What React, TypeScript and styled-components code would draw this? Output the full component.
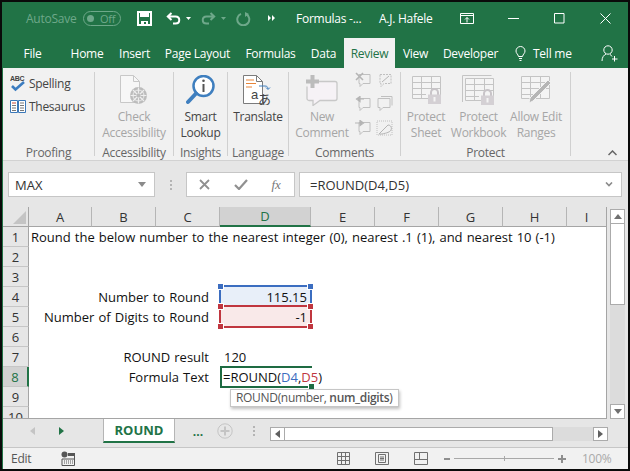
import React from 'react'
import styled, { createGlobalStyle } from 'styled-components'

const GREEN = '#217346'
const UI_FONT = "'Open Sans', 'Noto Sans', sans-serif"

const GlobalStyle = createGlobalStyle`
  html, body { margin: 0; padding: 0; background: #000; }
  body { font-family: ${UI_FONT}; font-size: 12px; }
`

const Frame = styled.div`
  width: 630px;
  height: 471px;
  box-sizing: border-box;
  padding: 2px;
  background: #0a0a0a;
  overflow: hidden;
`

const Window = styled.div`
  height: 467px;
  display: flex;
  flex-direction: column;
  box-sizing: border-box;
  border-left: 1px solid ${GREEN};
  border-bottom: 1px solid ${GREEN};
  background: #e6e6e6;
`

const TitleBar = styled.div`
  height: 32px;
  flex: none;
  display: flex;
  align-items: center;
  background: ${GREEN};
  color: #fff;
  letter-spacing: -0.25px;
`

const TitleSlot = styled.div<{ $w: number; $faded?: boolean }>`
  width: ${p => p.$w}px;
  flex: none;
  display: flex;
  align-items: center;
  white-space: nowrap;
  color: ${p => (p.$faded ? '#6ea88a' : '#fff')};
`

const Toggle = styled.div`
  width: 38px;
  height: 15px;
  box-sizing: border-box;
  border: 1px solid #6ea88a;
  border-radius: 8px;
  display: flex;
  align-items: center;
  padding-left: 3px;
  gap: 6px;
  color: #6ea88a;
  font-size: 11px;
  &::before {
    content: '';
    width: 7px;
    height: 7px;
    border-radius: 50%;
    background: #6ea88a;
  }
`

const TabBar = styled.div`
  height: 34px;
  flex: none;
  display: flex;
  background: ${GREEN};
  letter-spacing: -0.25px;
`

const Tab = styled.div<{ $w: number; $active?: boolean }>`
  width: ${p => p.$w}px;
  flex: none;
  margin-top: 4px;
  box-sizing: border-box;
  display: flex;
  align-items: center;
  justify-content: center;
  color: ${p => (p.$active ? GREEN : '#fff')};
  background: ${p => (p.$active ? '#f1f1f1' : 'transparent')};
`

const TellMe = styled.div`
  width: 96px;
  flex: none;
  margin-top: 4px;
  padding-left: 10px;
  box-sizing: border-box;
  display: flex;
  align-items: center;
  gap: 7px;
  color: #fff;
`

const AccountSlot = styled.div`
  margin-top: 4px;
  display: flex;
  align-items: center;
`

const Ribbon = styled.div`
  height: 93px;
  flex: none;
  box-sizing: border-box;
  padding-top: 4px;
  display: flex;
  position: relative;
  background: #f1f1f1;
  border-bottom: 1px solid #d2d2d2;
  letter-spacing: -0.28px;
`

const Group = styled.div<{ $w: number }>`
  width: ${p => p.$w}px;
  height: 84px;
  flex: none;
  box-sizing: border-box;
  border-right: 1px solid #d0d0d0;
  display: flex;
  flex-direction: column;
`

const GroupBody = styled.div<{ $start?: boolean }>`
  height: 72px;
  display: flex;
  justify-content: ${p => (p.$start ? 'flex-start' : 'center')};
`

const GroupLabel = styled.div`
  height: 12px;
  line-height: 18px;
  text-align: center;
  color: #666;
  white-space: nowrap;
`

const SmallColumn = styled.div`
  width: 100%;
  padding-left: 7px;
  box-sizing: border-box;
  display: flex;
  flex-direction: column;
`

const SmallButton = styled.div`
  height: 23px;
  display: flex;
  align-items: center;
  gap: 3px;
  color: #444;
`

const BigButton = styled.div<{ $w?: number; $disabled?: boolean }>`
  width: ${p => (p.$w ? `${p.$w}px` : 'auto')};
  flex: none;
  display: flex;
  flex-direction: column;
  align-items: center;
  color: ${p => (p.$disabled ? '#a6a6a6' : '#444')};
`

const BigIcon = styled.div`
  height: 37px;
  box-sizing: border-box;
  padding-top: 3px;
  display: flex;
  align-items: flex-start;
  justify-content: center;
`

const Label = styled.div`
  height: 16px;
  line-height: 16px;
  white-space: nowrap;
  text-align: center;
`

const MiniIcons = styled.div`
  display: grid;
  grid-template-columns: 21px 21px;
  grid-auto-rows: 24px;
  margin: -4px 0 0 -2px;
  align-self: flex-start;
  align-items: center;
  justify-items: center;
`

const Collapse = styled.svg`
  position: absolute;
  right: 11px;
  bottom: 4px;
`

const FormulaArea = styled.div`
  height: 46px;
  flex: none;
  box-sizing: border-box;
  padding: 11px 5px 0 5px;
  display: flex;
  align-items: flex-start;
`

const FieldBox = styled.div<{ $w: number; $gap?: number }>`
  width: ${p => p.$w}px;
  height: 25px;
  margin-left: ${p => p.$gap ?? 0}px;
  flex: none;
  box-sizing: border-box;
  background: #fff;
  border: 1px solid #c6c6c6;
  display: flex;
  align-items: center;
  font-size: 13px;
  color: #333;
`

const NameText = styled.span`
  flex: 1;
  padding-left: 6px;
`

const Grip = styled.div`
  width: 31px;
  flex: none;
  height: 25px;
  display: flex;
  flex-direction: column;
  justify-content: center;
  align-items: center;
  gap: 2px;
  i {
    width: 2px;
    height: 2px;
    background: #b4b4b4;
  }
`

const TabGrip = styled(Grip)`
  width: 37px;
  box-sizing: border-box;
  padding-left: 5px;
`

const FxSlot = styled.div`
  flex: 1;
  display: flex;
  justify-content: center;
  align-items: center;
`

const DropSlot = styled(FxSlot)`
  flex: none;
  width: 24px;
`

const FormulaText = styled.span`
  flex: 1;
  padding-left: 10px;
`

const SheetArea = styled.div`
  height: 212px;
  flex: none;
  display: flex;
`

const SheetGrid = styled.div`
  width: 604px;
  height: 212px;
  flex: none;
  overflow: hidden;
  position: relative;
  display: grid;
  grid-template-columns: 26px 63px 64px 64px 91px 64px 64px 64px 64px 40px;
  grid-auto-rows: 20px;
  box-sizing: border-box;
  border-right: 1px solid #a5a5a5;
  border-bottom: 1px solid #a5a5a5;
  background: #fff;
  font-family: ${UI_FONT};
  font-size: 13px;
  word-spacing: 0.7px;
  color: #111;
`

const Corner = styled.div`
  background: #e6e6e6;
  border-bottom: 1px solid #a5a5a5;
  border-right: 1px solid #a5a5a5;
  display: flex;
  align-items: flex-end;
  justify-content: flex-end;
  padding: 0 2px 2px 0;
  &::after {
    content: '';
    border-style: solid;
    border-width: 0 0 13px 13px;
    border-color: transparent transparent #c4c4c4 transparent;
  }
`

const ColHead = styled.div<{ $active?: boolean }>`
  display: flex;
  align-items: center;
  justify-content: center;
  box-sizing: border-box;
  border-right: 1px solid #b5b5b5;
  border-bottom: ${p => (p.$active ? `2px solid ${GREEN}` : '1px solid #a5a5a5')};
  color: ${p => (p.$active ? GREEN : '#333')};
  background: ${p => (p.$active ? '#d2d2d2' : '#e6e6e6')};
`

const RowHead = styled.div<{ $active?: boolean }>`
  display: flex;
  align-items: center;
  justify-content: center;
  box-sizing: border-box;
  border-bottom: 1px solid #c6c6c6;
  border-right: ${p => (p.$active ? `2px solid ${GREEN}` : '1px solid #a5a5a5')};
  color: ${p => (p.$active ? GREEN : '#333')};
  background: ${p => (p.$active ? '#d2d2d2' : '#e6e6e6')};
`

const Cell = styled.div<{ $align?: 'left' | 'right'; $indent?: number; $fill?: string }>`
  position: relative;
  display: flex;
  align-items: center;
  white-space: nowrap;
  background: ${p => p.$fill || 'transparent'};
  justify-content: ${p => (p.$align === 'right' ? 'flex-end' : 'flex-start')};
  padding-left: ${p => (p.$align === 'right' ? 0 : p.$indent ?? 2)}px;
  padding-right: ${p => (p.$align === 'right' ? p.$indent ?? 4 : 0)}px;
  box-sizing: border-box;
`

const RangeBox = styled.div<{ $color: string; $h: number }>`
  position: absolute;
  left: -1px;
  top: -2px;
  width: 93px;
  height: ${p => p.$h}px;
  box-sizing: border-box;
  border: 2px solid ${p => p.$color};
`

const RangeHandle = styled.i<{ $color: string; $x: 'left' | 'right'; $y: 'top' | 'bottom' }>`
  position: absolute;
  width: 5px;
  height: 5px;
  ${p => p.$x}: -3px;
  ${p => p.$y}: -3px;
  background: ${p => p.$color};
  box-shadow: 0 0 0 1px #fff;
`

const EditBox = styled.div`
  position: absolute;
  left: 0;
  top: -1px;
  width: 92px;
  height: 22px;
  box-sizing: border-box;
  border: 2px solid #1e6b42;
  border-right: 0;
`

const EditHandle = styled.i`
  position: absolute;
  right: -2px;
  bottom: -3px;
  width: 5px;
  height: 5px;
  background: #1e6b42;
  box-shadow: 0 0 0 1px #fff;
`

const FormulaEcho = styled.span`
  position: relative;
  margin-left: 1px;
`

const RefText = styled.span<{ $color: string }>`
  color: ${p => p.$color};
`

const Tooltip = styled.div`
  position: absolute;
  left: 10px;
  top: 22px;
  width: 169px;
  height: 18px;
  box-sizing: border-box;
  background: #fff;
  border: 1px solid #c6c6c6;
  box-shadow: 1px 2px 3px rgba(0, 0, 0, 0.25);
  color: #555;
  font-size: 12px;
  padding-left: 5px;
  line-height: 15px;
  letter-spacing: -0.32px;
  word-spacing: 0;
  b { font-weight: 600; }
`

const VScroll = styled.div`
  width: 15px;
  height: 212px;
  margin-left: 3px;
  padding-top: 2px;
  box-sizing: border-box;
  flex: none;
  display: flex;
  flex-direction: column;
`

const ScrollBtn = styled.div<{ $w?: number; $h?: number }>`
  width: ${p => p.$w ?? 15}px;
  height: ${p => p.$h ?? 15}px;
  flex: none;
  box-sizing: border-box;
  background: #fff;
  border: 1px solid #ababab;
  display: flex;
  align-items: center;
  justify-content: center;
`

const VThumb = styled.div`
  height: 81px;
  flex: none;
  box-sizing: border-box;
  background: #fff;
  border: 1px solid #ababab;
  border-top: 0;
`

const VTrack = styled.div`
  flex: 1;
  background: #dcdcdc;
`

const SheetTabs = styled.div`
  height: 24px;
  flex: none;
  display: flex;
  align-items: stretch;
`

const NavSlot = styled.div`
  width: 100px;
  flex: none;
  padding-left: 27px;
  gap: 24px;
  box-sizing: border-box;
  display: flex;
  align-items: center;
`

const SheetTab = styled.div`
  width: 72px;
  flex: none;
  box-sizing: border-box;
  background: #fff;
  border-left: 1px solid #b5b5b5;
  border-right: 1px solid #b5b5b5;
  border-bottom: 2px solid ${GREEN};
  display: flex;
  align-items: center;
  justify-content: center;
  color: ${GREEN};
  font-weight: 700;
  font-size: 13px;
`

const More = styled.div`
  width: 42px;
  flex: none;
  box-sizing: border-box;
  padding-left: 4px;
  display: flex;
  align-items: center;
  justify-content: center;
  color: ${GREEN};
  font-weight: 700;
`

const TabTools = styled.div`
  width: 53px;
  flex: none;
  display: flex;
  align-items: center;
  svg { flex: none; }
`

const HScroll = styled.div`
  flex: none;
  width: 338px;
  margin-top: 8px;
  height: 14px;
  display: flex;
`

const HThumb = styled.div`
  width: 268px;
  flex: none;
  box-sizing: border-box;
  background: #fff;
  border: 1px solid #ababab;
  border-left: 0;
`

const HTrack = styled.div`
  flex: 1;
  background: #dcdcdc;
`

const StatusBar = styled.div`
  height: 22px;
  margin-top: 4px;
  flex: none;
  box-sizing: border-box;
  border-top: 1px solid #c6c6c6;
  background: #f1f1f1;
  display: flex;
  align-items: center;
  color: #555;
  letter-spacing: -0.25px;
`

const StatusText = styled.span<{ $w: number; $pad?: number; $muted?: boolean }>`
  width: ${p => p.$w}px;
  padding-left: ${p => p.$pad ?? 0}px;
  box-sizing: border-box;
  flex: none;
  color: ${p => (p.$muted ? '#a9a9a9' : '#555')};
`

const StatusIcons = styled.div`
  display: flex;
  width: 103px;
  gap: 25px;
  margin-left: 262px;
  flex: none;
  align-items: center;
`

const Zoom = styled.div`
  display: flex;
  align-items: center;
  width: 138px;
  margin-left: 4px;
  flex: none;
`

const ZoomMark = styled.span<{ $plus?: boolean }>`
  position: relative;
  width: ${p => (p.$plus ? 8 : 6)}px;
  height: 2px;
  background: #8e8e8e;
  flex: none;
  &::after {
    content: '';
    display: ${p => (p.$plus ? 'block' : 'none')};
    position: absolute;
    left: 3px;
    top: -3px;
    width: 2px;
    height: 8px;
    background: #8e8e8e;
  }
`

const ZoomTrack = styled.div`
  position: relative;
  width: 100px;
  height: 1px;
  margin: 0 4px;
  flex: none;
  background: #a8a8a8;
  &::after {
    content: '';
    position: absolute;
    left: 50px;
    top: -2px;
    width: 1px;
    height: 5px;
    background: #a8a8a8;
  }
`

/* ---------- drawn icons ---------- */

const SaveIcon = () => (
  <svg width="15" height="15" viewBox="0 0 15 15">
    <path d="M1 1h13v13H1z" fill="none" stroke="#fff" strokeWidth="2" />
    <path d="M3 1h9v5H3zM4 10h7v4H4z" fill="#fff" />
    <path d="M7 11h2v2H7z" fill={GREEN} />
  </svg>
)

const UndoIcon = ({ color }: { color: string }) => (
  <svg width="15" height="13" viewBox="0 0 15 13">
    <path d="M5.5 1 1.8 4.5l3.7 3.5M2 4.5h7.5c5 0 5 7 0 7H7" fill="none" stroke={color} strokeWidth="2" />
  </svg>
)

const RedoIcon = ({ color }: { color: string }) => (
  <svg width="15" height="13" viewBox="0 0 15 13">
    <path d="M9.5 1l3.7 3.5L9.5 8M13 4.5H5.5c-5 0-5 7 0 7H8" fill="none" stroke={color} strokeWidth="2" />
  </svg>
)

const RepeatIcon = () => (
  <svg width="15" height="15" viewBox="0 0 15 15">
    <path d="M5 2.800a6 6 0 1 0 5 .2" fill="none" stroke="#6ea88a" strokeWidth="2" />
    <path d="M9 1v5l4-3z" fill="#6ea88a" />
  </svg>
)

const Caret = ({ color }: { color: string }) => (
  <svg width="5" height="3" viewBox="0 0 5 3">
    <path d="M0 0h5L2.500 3z" fill={color} />
  </svg>
)

const OverflowIcon = () => (
  <svg width="7" height="6" viewBox="0 0 7 6">
    <path d="M0 0l3 3-3 3zM4 0l3 3-3 3z" fill="#fff" />
  </svg>
)

const DisplayIcon = () => (
  <svg width="14" height="11" viewBox="0 0 14 11">
    <path d="M.5.500h13v10H.500zM1 2.500h12" fill="none" stroke="#fff" />
    <path d="M7 9.500V4.500M5 6.500l2-2 2 2" fill="none" stroke="#fff" />
  </svg>
)

const WinMin = () => (
  <svg width="11" height="11" viewBox="0 0 11 11">
    <path d="M0 5.500h11" stroke="#fff" />
  </svg>
)

const WinMax = () => (
  <svg width="11" height="11" viewBox="0 0 11 11">
    <path d="M.5.500h9.500v9.500H.500z" fill="none" stroke="#fff" />
  </svg>
)

const WinClose = () => (
  <svg width="11" height="11" viewBox="0 0 11 11">
    <path d="M.5.500l10 10M10.500.500l-10 10" stroke="#fff" />
  </svg>
)

const BulbIcon = () => (
  <svg width="11" height="15" viewBox="0 0 11 15">
    <path d="M3.500 10.500C3 8 1 7.500 1 5a4.500 4.500 0 0 1 9 0c0 2.500-2 3-2.500 5.500zM4 12.500h3M4.500 14.500h2" fill="none" stroke="#fff" />
  </svg>
)

const PersonIcon = () => (
  <svg width="17" height="17" viewBox="0 0 17 17">
    <circle cx="7" cy="5" r="4.200" fill="none" stroke="#fff" />
    <path d="M1 16c0-4 2-6 4-7M9 9.500c1 .5 1.500 1 2 2M13.500 11v5.500M11 14h5.500" fill="none" stroke="#fff" />
  </svg>
)

const SpellIcon = () => (
  <svg width="16" height="19" viewBox="0 0 16 19">
    <text x="0" y="7" fontSize="7" fontWeight="700" fontFamily="Liberation Sans, sans-serif" fill="#444">
      ABC
    </text>
    <path d="M2 12l3.500 3.500L14 8" fill="none" stroke="#3b7cc0" strokeWidth="2.600" />
  </svg>
)

const ThesaurusIcon = () => (
  <svg width="16" height="13" viewBox="0 0 16 13">
    <path d="M.5.500h7v12h-7zM8.500.500h7v12h-7z" fill="#fff" stroke="#3b78b8" />
    <path d="M2 3h4" stroke="#c84a3a" />
    <path d="M2 5.500h4M2 8h4M2 10.500h4M10 3h4M10 5.500h4M10 8h4M10 10.500h4" stroke="#777" />
  </svg>
)

const CheckAccIcon = () => (
  <svg width="28" height="30" viewBox="0 0 28 30">
    <path d="M.5.500h13l6 6v21H.500z" fill="#f7f7f7" stroke="#c8c8c8" />
    <path d="M13.500.500v6h6" fill="none" stroke="#c8c8c8" />
    <circle cx="18.500" cy="20.500" r="8.500" fill="#bcbcbc" />
    <circle cx="18.500" cy="20.500" r="5.500" fill="none" stroke="#eee" />
    <path d="M18.500 12.500v16M10.500 20.500h16M13 15l11 11M24 15 13 26" stroke="#eee" strokeWidth="1.200" />
    <circle cx="18.500" cy="20.500" r="2" fill="#bcbcbc" />
  </svg>
)

const LookupIcon = () => (
  <svg width="29" height="30" viewBox="0 0 29 30">
    <circle cx="17.500" cy="11" r="10" fill="#fff" stroke="#3f7fbf" strokeWidth="2.500" />
    <path d="M10 18.500 2 27" stroke="#3f7fbf" strokeWidth="4" strokeLinecap="round" />
    <path d="M17.500 9v8" stroke="#555" strokeWidth="2" />
    <circle cx="17.500" cy="5.800" r="1.300" fill="#555" />
  </svg>
)

const TranslateIcon = () => (
  <svg width="30" height="30" viewBox="0 0 30 30">
    <path d="M.5.500h13l6 6v22H.500z" fill="#fff" stroke="#7b7b7b" />
    <path d="M13.500.500v6h6" fill="none" stroke="#7b7b7b" />
    <path d="M3 5h8M3 8.500h10M3 12h6" stroke="#e8853a" />
    <path d="M16 11h6c2 0 3 1 3 3M23 12.500l2 2 2-2" fill="none" stroke="#3f7fbf" />
    <text x="8" y="24" fontSize="13" fontFamily="Liberation Sans, sans-serif" fill="#444">
      a
    </text>
    <text x="15" y="29" fontSize="13" fontFamily="Noto Sans CJK JP, sans-serif" fill="#444">
      あ
    </text>
  </svg>
)

const NewCommentIcon = () => (
  <svg width="32" height="31" viewBox="0 0 32 31">
    <path d="M7 6.500h22a2 2 0 0 1 2 2v15a2 2 0 0 1-2 2H14l-7 5v-5H3a2 2 0 0 1-2-2v-12" fill="#f6f2f6" stroke="#c8c8c8" strokeWidth="1.300" />
    <path d="M4.500 0h4v4.500H13v4H8.500V13h-4V8.500H0v-4h4.500z" fill="#bcbcbc" />
  </svg>
)

const MiniBubble = ({ mark }: { mark: 'del' | 'prev' | 'next' | 'edit' | 'show' | 'ink' }) => (
  <svg width="17" height="16" viewBox="0 0 17 16">
    {mark === 'ink' ? (
      <>
        <path d="M1 1h15v14H1z" fill="none" stroke="#c0c0c0" strokeDasharray="1 1" />
        <path d="M3 14 12 5c3 0 4 3 3 5s-4 3-9 4z" fill="none" stroke="#b5b5b5" />
      </>
    ) : (
      <>
        {mark === 'show' && <path d="M5 .5h11v9" fill="none" stroke="#c0c0c0" />}
        <path
          d={
            mark === 'show'
              ? 'M2 2.500h12v9H7l-3 3v-3H2z'
              : 'M4 2.500h11v9H8l-3 3v-3H4z'
          }
          fill="none"
          stroke="#c0c0c0"
          strokeDasharray={mark === 'edit' ? '2 1' : undefined}
        />
        {mark === 'edit' && <path d="M6 10l7-6" stroke="#b5b5b5" />}
        {mark === 'del' && <path d="M1 1l7 7M8 1 1 8" stroke="#b5b5b5" strokeWidth="1.600" />}
        {mark === 'prev' && <path d="M9 3H3M5 .5 1.500 3 5 5.500z" fill="#b5b5b5" stroke="#b5b5b5" strokeWidth="1.200" />}
        {mark === 'next' && <path d="M0 3h6M5 .5 8.500 3 5 5.500z" fill="#b5b5b5" stroke="#b5b5b5" strokeWidth="1.200" />}
      </>
    )}
  </svg>
)

const SheetLines = ({ x, y }: { x: number; y: number }) => (
  <path
    d={`M${x}.5 ${y}.5h28v22h-28zM${x} ${y + 6}.5h28M${x} ${y + 12}.5h28M${x} ${y + 18}.5h14M${x + 9}.5 ${y}v22M${x + 19}.5 ${y}v22`}
    fill="#f4f4f4"
    stroke="#c4c4c4"
  />
)

const Lock = ({ x, y }: { x: number; y: number }) => (
  <>
    <path d={`M${x + 3} ${y + 6}v-2.500a3.500 3.500 0 0 1 7 0V${y + 6}`} fill="none" stroke="#c8c4c8" strokeWidth="2" />
    <rect x={x} y={y + 5.5} width="13" height="9.500" fill="#d4d0d4" />
    <rect x={x + 5.5} y={y + 8} width="2" height="4.500" fill="#f4f4f4" />
  </>
)

const ProtectSheetIcon = () => (
  <svg width="31" height="30" viewBox="0 0 31 30">
    <SheetLines x={1} y={1} />
    <Lock x={17} y={14} />
  </svg>
)

const ProtectBookIcon = () => (
  <svg width="33" height="30" viewBox="0 0 33 30">
    <path d="M.5 27V.500h29" fill="none" stroke="#c4c4c4" />
    <SheetLines x={3} y={3} />
    <Lock x={19} y={15} />
  </svg>
)

const AllowEditIcon = () => (
  <svg width="31" height="30" viewBox="0 0 31 30">
    <SheetLines x={0} y={1} />
    <path d="M27 5 30 8 12 26l-4 2 1-5z" fill="#b5b5b5" stroke="#f1f1f1" strokeWidth="1" />
  </svg>
)

const CrossIcon = () => (
  <svg width="11" height="11" viewBox="0 0 11 11">
    <path d="M1 1l9 9M10 1l-9 9" stroke="#909090" strokeWidth="1.800" />
  </svg>
)

const TickIcon = () => (
  <svg width="14" height="11" viewBox="0 0 14 11">
    <path d="M1 6l4 4 8-9" fill="none" stroke="#909090" strokeWidth="2.200" />
  </svg>
)

const FxText = styled.span`
  font-family: 'Liberation Serif', serif;
  font-style: italic;
  font-size: 13px;
  color: #777;
`

const Triangle = ({ dir, color }: { dir: 'l' | 'r' | 'u' | 'd'; color: string }) => {
  const d = { l: 'M5 0v8L0 4z', r: 'M0 0v8l5-4z', u: 'M0 5h8L4 0z', d: 'M0 0h8L4 5z' }[dir]
  const wide = dir === 'u' || dir === 'd'
  return (
    <svg width={wide ? 8 : 5} height={wide ? 5 : 8} viewBox={wide ? '0 0 8 5' : '0 0 5 8'}>
      <path d={d} fill={color} />
    </svg>
  )
}

const AddSheetIcon = () => (
  <svg width="16" height="16" viewBox="0 0 16 16">
    <circle cx="8" cy="8" r="7.200" fill="none" stroke="#c4c4c4" />
    <path d="M8 3.500v9M3.500 8h9" stroke="#c4c4c4" strokeWidth="2" />
  </svg>
)

const MacroIcon = () => (
  <svg width="14" height="15" viewBox="0 0 14 15">
    <circle cx="3.500" cy="3.500" r="3" fill="#555" />
    <path d="M7 2.500h6.500v12H1V8h12.500" fill="none" stroke="#555" />
    <path d="M7 2h7v3H7z" fill="#555" />
    <path d="M3 10h9M3 12h9" stroke="#555" strokeDasharray="1 1" />
  </svg>
)

const NormalViewIcon = () => (
  <svg width="13" height="13" viewBox="0 0 13 13">
    <path d="M.5.500h12v12H.500zM.5 4.500h12M.5 8.500h12M4.500.500v12M8.500.500v12" fill="none" stroke="#707070" />
  </svg>
)

const PageViewIcon = () => (
  <svg width="14" height="13" viewBox="0 0 14 13">
    <path d="M.5.500h13v12H.500zM3.500 2.500h7v8h-7zM5 5h4M5 6.500h4M5 8h4" fill="none" stroke="#707070" />
  </svg>
)

const BreakViewIcon = () => (
  <svg width="14" height="13" viewBox="0 0 14 13">
    <path d="M.5.500h13v12H.500zM.5 7.500h13M5.500.500v7" fill="none" stroke="#707070" />
  </svg>
)

/* ---------- sheet data ---------- */

const columns = ['A', 'B', 'C', 'D', 'E', 'F', 'G', 'H', 'I']
const rows = [1, 2, 3, 4, 5, 6, 7, 8, 9, 10]

const RED = '#c0363f'
const BLUE = '#3b6dc0'

const cellContent = (id: string) => {
  switch (id) {
    case 'A1':
      return <Cell key={id}>Round the below number to the nearest integer (0), nearest .1 (1), and nearest 10 (-1)</Cell>
    case 'C4':
      return <Cell key={id} $align="right" $indent={11}>Number to Round</Cell>
    case 'C5':
      return <Cell key={id} $align="right" $indent={11}>Number of Digits to Round</Cell>
    case 'C7':
      return <Cell key={id} $align="right" $indent={11}>ROUND result</Cell>
    case 'C8':
      return <Cell key={id} $align="right" $indent={11}>Formula Text</Cell>
    case 'D4':
      return (
        <Cell key={id} $align="right" $fill="#e8eff9">
          115.15
          <RangeBox $color={BLUE} $h={22}>
            <RangeHandle $color={BLUE} $x="left" $y="top" />
            <RangeHandle $color={BLUE} $x="right" $y="top" />
          </RangeBox>
        </Cell>
      )
    case 'D5':
      return (
        <Cell key={id} $align="right" $fill="#f9e9e9">
          -1
          <RangeBox $color={RED} $h={23}>
            <RangeHandle $color={RED} $x="left" $y="top" />
            <RangeHandle $color={RED} $x="right" $y="top" />
            <RangeHandle $color={RED} $x="left" $y="bottom" />
            <RangeHandle $color={RED} $x="right" $y="bottom" />
          </RangeBox>
        </Cell>
      )
    case 'D7':
      return <Cell key={id} $indent={4}>120</Cell>
    case 'D8':
      return (
        <Cell key={id}>
          <FormulaEcho>
            =ROUND(<RefText $color={BLUE}>D4</RefText>,<RefText $color={RED}>D5</RefText>)
          </FormulaEcho>
          <EditBox>
            <EditHandle />
          </EditBox>
          <Tooltip>
            ROUND(number, <b>num_digits</b>)
          </Tooltip>
        </Cell>
      )
    default:
      return <Cell key={id} />
  }
}

export default function App() {
  return (
    <>
      <GlobalStyle />
      <Frame>
        <Window>
          <TitleBar>
            <TitleSlot $w={23} />
            <TitleSlot $w={57} $faded>AutoSave</TitleSlot>
            <TitleSlot $w={54}><Toggle>Off</Toggle></TitleSlot>
            <TitleSlot $w={29}><SaveIcon /></TitleSlot>
            <TitleSlot $w={20}><UndoIcon color="#fff" /></TitleSlot>
            <TitleSlot $w={15}><Caret color="#fff" /></TitleSlot>
            <TitleSlot $w={20}><RedoIcon color="#6ea88a" /></TitleSlot>
            <TitleSlot $w={15}><Caret color="#6ea88a" /></TitleSlot>
            <TitleSlot $w={32}><RepeatIcon /></TitleSlot>
            <TitleSlot $w={28}><OverflowIcon /></TitleSlot>
            <TitleSlot $w={83}>Formulas -...</TitleSlot>
            <TitleSlot $w={81}>A.J. Hafele</TitleSlot>
            <TitleSlot $w={48}><DisplayIcon /></TitleSlot>
            <TitleSlot $w={46}><WinMin /></TitleSlot>
            <TitleSlot $w={46}><WinMax /></TitleSlot>
            <TitleSlot $w={20}><WinClose /></TitleSlot>
          </TitleBar>

          <TabBar>
            <Tab $w={59}>File</Tab>
            <Tab $w={50}>Home</Tab>
            <Tab $w={45}>Insert</Tab>
            <Tab $w={81}>Page Layout</Tab>
            <Tab $w={65}>Formulas</Tab>
            <Tab $w={41}>Data</Tab>
            <Tab $w={51} $active>Review</Tab>
            <Tab $w={41}>View</Tab>
            <Tab $w={69}>Developer</Tab>
            <TellMe><BulbIcon />Tell me</TellMe>
            <AccountSlot><PersonIcon /></AccountSlot>
          </TabBar>

          <Ribbon>
            <Group $w={92}>
              <GroupBody>
                <SmallColumn>
                  <SmallButton><SpellIcon />Spelling</SmallButton>
                  <SmallButton><ThesaurusIcon />Thesaurus</SmallButton>
                </SmallColumn>
              </GroupBody>
              <GroupLabel>Proofing</GroupLabel>
            </Group>
            <Group $w={79}>
              <GroupBody>
                <BigButton $disabled>
                  <BigIcon><CheckAccIcon /></BigIcon>
                  <Label>Check</Label>
                  <Label>Accessibility</Label>
                </BigButton>
              </GroupBody>
              <GroupLabel>Accessibility</GroupLabel>
            </Group>
            <Group $w={54}>
              <GroupBody>
                <BigButton>
                  <BigIcon><LookupIcon /></BigIcon>
                  <Label>Smart</Label>
                  <Label>Lookup</Label>
                </BigButton>
              </GroupBody>
              <GroupLabel>Insights</GroupLabel>
            </Group>
            <Group $w={61}>
              <GroupBody>
                <BigButton>
                  <BigIcon><TranslateIcon /></BigIcon>
                  <Label>Translate</Label>
                </BigButton>
              </GroupBody>
              <GroupLabel>Language</GroupLabel>
            </Group>
            <Group $w={112}>
              <GroupBody $start>
                <BigButton $w={66} $disabled>
                  <BigIcon><NewCommentIcon /></BigIcon>
                  <Label>New</Label>
                  <Label>Comment</Label>
                </BigButton>
                <MiniIcons>
                  <MiniBubble mark="del" />
                  <MiniBubble mark="edit" />
                  <MiniBubble mark="prev" />
                  <MiniBubble mark="show" />
                  <MiniBubble mark="next" />
                  <MiniBubble mark="ink" />
                </MiniIcons>
              </GroupBody>
              <GroupLabel>Comments</GroupLabel>
            </Group>
            <Group $w={170}>
              <GroupBody $start>
                <BigButton $w={50} $disabled>
                  <BigIcon><ProtectSheetIcon /></BigIcon>
                  <Label>Protect</Label>
                  <Label>Sheet</Label>
                </BigButton>
                <BigButton $w={55} $disabled>
                  <BigIcon><ProtectBookIcon /></BigIcon>
                  <Label>Protect</Label>
                  <Label>Workbook</Label>
                </BigButton>
                <BigButton $w={60} $disabled>
                  <BigIcon><AllowEditIcon /></BigIcon>
                  <Label>Allow Edit</Label>
                  <Label>Ranges</Label>
                </BigButton>
              </GroupBody>
              <GroupLabel>Protect</GroupLabel>
            </Group>
            <Collapse width="9" height="6" viewBox="0 0 9 6">
              <path d="M.5 5 4.500 1l4 4" fill="none" stroke="#666" strokeWidth="1.500" />
            </Collapse>
          </Ribbon>

          <FormulaArea>
            <FieldBox $w={147}>
              <NameText>MAX</NameText>
              <DropSlot><Triangle dir="d" color="#8a8a8a" /></DropSlot>
            </FieldBox>
            <Grip><i /><i /><i /></Grip>
            <FieldBox $w={109}>
              <FxSlot><CrossIcon /></FxSlot>
              <FxSlot><TickIcon /></FxSlot>
              <FxSlot><FxText>fx</FxText></FxSlot>
            </FieldBox>
            <FieldBox $w={323} $gap={4}>
              <FormulaText>=ROUND(D4,D5)</FormulaText>
              <DropSlot>
                <svg width="8" height="5" viewBox="0 0 8 5"><path d="M1 .5l3 3 3-3" fill="none" stroke="#8a8a8a" strokeWidth="1.600" /></svg>
              </DropSlot>
            </FieldBox>
          </FormulaArea>

          <SheetArea>
            <SheetGrid>
              <Corner />
              {columns.map(c => (
                <ColHead key={c} $active={c === 'D'}>{c}</ColHead>
              ))}
              {rows.map(r => (
                <React.Fragment key={r}>
                  <RowHead $active={r === 8}>{r}</RowHead>
                  {columns.map(c => cellContent(`${c}${r}`))}
                </React.Fragment>
              ))}
            </SheetGrid>
            <VScroll>
              <ScrollBtn><Triangle dir="u" color="#707070" /></ScrollBtn>
              <VThumb />
              <VTrack />
              <ScrollBtn><Triangle dir="d" color="#707070" /></ScrollBtn>
            </VScroll>
          </SheetArea>

          <SheetTabs>
            <NavSlot>
              <Triangle dir="l" color="#c4c4c4" />
              <Triangle dir="r" color={GREEN} />
            </NavSlot>
            <SheetTab>ROUND</SheetTab>
            <More>...</More>
            <TabTools>
              <AddSheetIcon />
              <TabGrip><i /><i /><i /></TabGrip>
            </TabTools>
            <HScroll>
              <ScrollBtn $h={14}><Triangle dir="l" color="#606060" /></ScrollBtn>
              <HThumb />
              <HTrack />
              <ScrollBtn $h={14}><Triangle dir="r" color="#606060" /></ScrollBtn>
            </HScroll>
          </SheetTabs>

          <StatusBar>
            <StatusText $w={58} $pad={8}>Edit</StatusText>
            <MacroIcon />
            <StatusIcons>
              <NormalViewIcon />
              <PageViewIcon />
              <BreakViewIcon />
            </StatusIcons>
            <Zoom>
              <ZoomMark />
              <ZoomTrack />
              <ZoomMark $plus />
            </Zoom>
            <StatusText $w={40} $muted>100%</StatusText>
          </StatusBar>
        </Window>
      </Frame>
    </>
  )
}
